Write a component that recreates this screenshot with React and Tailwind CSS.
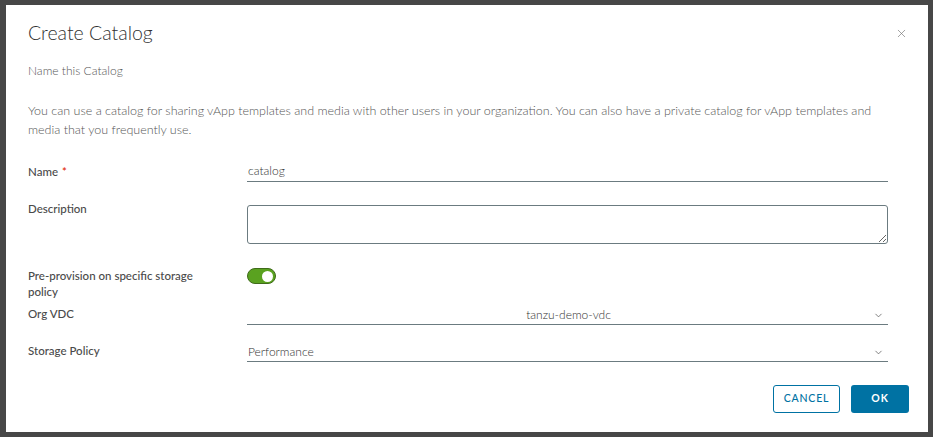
import { ChevronDown, X } from 'lucide-react';

function Row({ label, required, children, className = '' }) {
  return (
    <div className={`flex ${className}`}>
      <div className="w-[219px] shrink-0 text-[11.5px] font-medium leading-[16px] text-[#4a4a4a]">
        {label}
        {required && <span className="ml-1 text-[#e02200]">*</span>}
      </div>
      <div className="flex-1">{children}</div>
    </div>
  );
}

function Select({ value, center }) {
  return (
    <div className="flex h-[19px] items-center border-b border-[#6b7b80] pl-[1px] pr-[4px] text-[12px] font-light text-[#313131]">
      <span className={center ? 'flex-1 text-center pl-4' : 'flex-1'}>{value}</span>
      <ChevronDown size={11} strokeWidth={1.6} className="text-[#555]" />
    </div>
  );
}

export default function App() {
  return (
    <div className="h-[437px] w-[933px] bg-[#474747] pl-[6px] pt-[5px]" style={{ fontFamily: 'Lato, "Open Sans", sans-serif' }}>
      <div className="flex h-[427px] w-[922px] flex-col bg-white pl-[22px] pr-[40px]">
        <div className="flex items-center justify-between pt-[16px]">
          <h1 className="text-[19.5px] font-light leading-[24px] text-[#313131]">Create Catalog</h1>
          <X size={13} strokeWidth={1.2} className="-mr-[20px] text-[#737373]" />
        </div>
        <p className="mt-[18px] text-[12px] font-light leading-[16px] text-[#565656]">Name this Catalog</p>
        <p className="mt-[22px] text-[12.5px] font-light leading-[19px] text-[#565656]">
          You can use a catalog for sharing vApp templates and media with other users in your organization. You can also have a private catalog for vApp templates and media that you frequently use.
        </p>

        <Row label="Name" required className="mt-[25px]">
          <div className="-mt-[3px] h-[21px] border-b border-[#6b7b80] pl-[1px] text-[12px] font-light leading-[20px] text-[#313131]">catalog</div>
        </Row>

        <Row label="Description" className="mt-[19px]">
          <textarea className="mt-[4px] block h-[39px] w-full rounded-[3px] border border-[#6b7b80] outline-none" />
        </Row>

        <Row label={<>Pre-provision on specific storage<br />policy</>} className="mt-[24px]">
          <div className="flex h-[16px] w-[29px] items-center justify-end rounded-full border border-[#3f6b1a] bg-[#5aa220] pr-[2px]">
            <div className="h-[11px] w-[11px] rounded-full bg-white" />
          </div>
        </Row>

        <Row label="Org VDC" className="mt-[6px]">
          <Select value="tanzu-demo-vdc" center />
        </Row>

        <Row label="Storage Policy" className="mt-[18px]">
          <Select value="Performance" />
        </Row>

        <div className="mt-auto mb-[19px] flex justify-end gap-[11px] -mr-[21px]">
          <button className="h-[28px] w-[67px] rounded-[3px] border border-[#0072a3] text-[10.5px] font-medium tracking-[0.08em] text-[#0072a3]">CANCEL</button>
          <button className="h-[28px] w-[58px] rounded-[3px] bg-[#0072a3] text-[10.5px] font-bold tracking-[0.08em] text-white">OK</button>
        </div>
      </div>
    </div>
  );
}
